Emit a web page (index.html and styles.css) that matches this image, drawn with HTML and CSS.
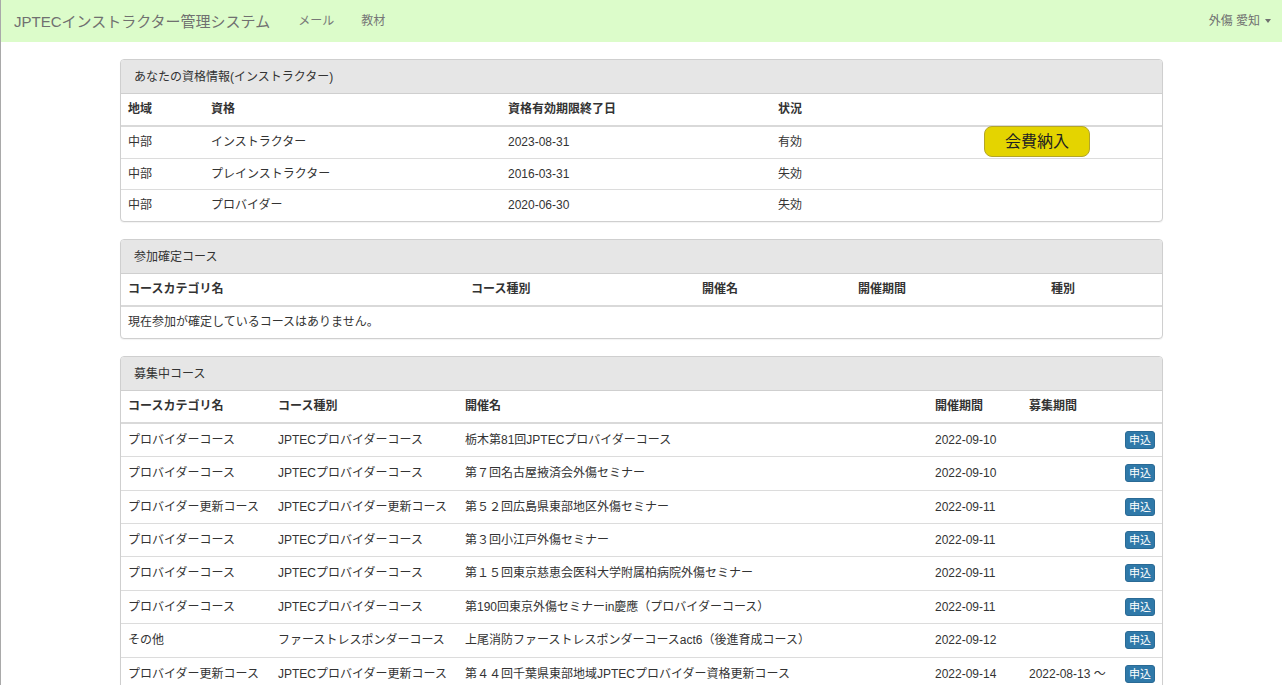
FILE: index.html
```html
<!DOCTYPE html>
<html lang="ja">
<head>
<meta charset="utf-8">
<title>JPTECインストラクター管理システム</title>
<link rel="stylesheet" href="styles.css">
</head>
<body>
<nav class="navbar">
  <div class="nav-left">
    <a class="brand">JPTECインストラクター管理システム</a>
    <a class="nav-link">メール</a>
    <a class="nav-link">教材</a>
  </div>
  <a class="nav-user">外傷 愛知 <span class="caret"></span></a>
</nav>
<main class="container">
  <section class="panel">
    <div class="panel-heading">あなたの資格情報(インストラクター)</div>
    <table class="table t1">
      <colgroup><col class="c1a"><col class="c1b"><col class="c1c"><col class="c1d"><col></colgroup>
      <thead><tr><th>地域</th><th>資格</th><th>資格有効期限終了日</th><th>状況</th><th></th></tr></thead>
      <tbody>
        <tr><td>中部</td><td>インストラクター</td><td>2023-08-31</td><td>有効</td><td class="btn-cell"><span class="btn-pay">会費納入</span></td></tr>
        <tr><td>中部</td><td>プレインストラクター</td><td>2016-03-31</td><td>失効</td><td></td></tr>
        <tr><td>中部</td><td>プロバイダー</td><td>2020-06-30</td><td>失効</td><td></td></tr>
      </tbody>
    </table>
  </section>

  <section class="panel">
    <div class="panel-heading">参加確定コース</div>
    <table class="table t2">
      <colgroup><col class="c2a"><col class="c2b"><col class="c2c"><col class="c2d"><col></colgroup>
      <thead><tr><th>コースカテゴリ名</th><th>コース種別</th><th>開催名</th><th>開催期間</th><th>種別</th></tr></thead>
      <tbody>
        <tr><td colspan="5">現在参加が確定しているコースはありません。</td></tr>
      </tbody>
    </table>
  </section>

  <section class="panel">
    <div class="panel-heading">募集中コース</div>
    <table class="table t3">
      <colgroup><col class="c3a"><col class="c3b"><col class="c3c"><col class="c3d"><col class="c3e"><col></colgroup>
      <thead><tr><th>コースカテゴリ名</th><th>コース種別</th><th>開催名</th><th>開催期間</th><th>募集期間</th><th></th></tr></thead>
      <tbody>
        <tr><td>プロバイダーコース</td><td>JPTECプロバイダーコース</td><td>栃木第81回JPTECプロバイダーコース</td><td>2022-09-10</td><td></td><td class="apply"><span class="btn-apply">申込</span></td></tr>
        <tr><td>プロバイダーコース</td><td>JPTECプロバイダーコース</td><td>第７回名古屋掖済会外傷セミナー</td><td>2022-09-10</td><td></td><td class="apply"><span class="btn-apply">申込</span></td></tr>
        <tr><td>プロバイダー更新コース</td><td>JPTECプロバイダー更新コース</td><td>第５２回広島県東部地区外傷セミナー</td><td>2022-09-11</td><td></td><td class="apply"><span class="btn-apply">申込</span></td></tr>
        <tr><td>プロバイダーコース</td><td>JPTECプロバイダーコース</td><td>第３回小江戸外傷セミナー</td><td>2022-09-11</td><td></td><td class="apply"><span class="btn-apply">申込</span></td></tr>
        <tr><td>プロバイダーコース</td><td>JPTECプロバイダーコース</td><td>第１５回東京慈恵会医科大学附属柏病院外傷セミナー</td><td>2022-09-11</td><td></td><td class="apply"><span class="btn-apply">申込</span></td></tr>
        <tr><td>プロバイダーコース</td><td>JPTECプロバイダーコース</td><td>第190回東京外傷セミナーin慶應（プロバイダーコース）</td><td>2022-09-11</td><td></td><td class="apply"><span class="btn-apply">申込</span></td></tr>
        <tr><td>その他</td><td>ファーストレスポンダーコース</td><td>上尾消防ファーストレスポンダーコースact6（後進育成コース）</td><td>2022-09-12</td><td></td><td class="apply"><span class="btn-apply">申込</span></td></tr>
        <tr><td>プロバイダー更新コース</td><td>JPTECプロバイダー更新コース</td><td>第４４回千葉県東部地域JPTECプロバイダー資格更新コース</td><td>2022-09-14</td><td>2022-08-13 〜</td><td class="apply"><span class="btn-apply">申込</span></td></tr>
        <tr><td>プロバイダーコース</td><td>JPTECプロバイダーコース</td><td>第２回外傷セミナー</td><td>2022-09-17</td><td></td><td class="apply"><span class="btn-apply">申込</span></td></tr>
      </tbody>
    </table>
  </section>
</main>
</body>
</html>
```

FILE: styles.css
```css
* { box-sizing: border-box; }
html, body { margin: 0; padding: 0; }
body {
  font-family: "Liberation Sans", "Noto Sans CJK JP", sans-serif;
  font-size: 12px;
  line-height: 17px;
  color: #333;
  background: #fff;
  border-left: 1px solid #a9a9a9;
  min-height: 685px;
}
.navbar {
  height: 42px;
  background: #dcfcca;
  display: flex;
  align-items: center;
  justify-content: space-between;
  padding: 0 11px 0 13px;
}
.nav-left { display: flex; align-items: center; }
.brand {
  font-size: 15px;
  color: #707070;
  margin-right: 28px;
}
.nav-link {
  font-size: 12px;
  color: #777;
  margin-right: 27px;
}
.nav-user {
  font-size: 12px;
  color: #707070;
  display: flex;
  align-items: center;
}
.caret {
  display: inline-block;
  width: 0; height: 0;
  margin-left: 5px;
  border-top: 4px solid #707070;
  border-left: 3.5px solid transparent;
  border-right: 3.5px solid transparent;
}
.container {
  width: 1043px;
  margin: 0 auto;
  padding-top: 17px;
  display: flex;
  flex-direction: column;
  gap: 17px;
}
.panel {
  border: 1px solid #cfcfcf;
  border-radius: 4px;
  background: #fff;
  box-shadow: 0 1px 1px rgba(0,0,0,0.05);
  overflow: hidden;
}
.panel-heading {
  background: #e6e6e6;
  border-bottom: 1px solid #cfcfcf;
  padding: 9px 13px 8px;
  line-height: 16px;
  color: #333;
}
.table {
  width: 100%;
  border-collapse: collapse;
  table-layout: fixed;
}
.table th, .table td {
  text-align: left;
  padding: 7px 7px;
  vertical-align: middle;
  white-space: nowrap;
}
.table td { line-height: 16.67px; }
.table th {
  font-weight: bold;
  line-height: 17px;
  border-bottom: 2px solid #d9d9d9;
}
.table tbody td { border-top: 1px solid #dcdcdc; }
.table tbody tr:first-child td { border-top: 0; }

.c1a { width: 83px; }
.c1b { width: 297px; }
.c1c { width: 270px; }
.c1d { width: 207px; }
.btn-cell { padding-top: 0 !important; padding-bottom: 0 !important; }
.btn-pay {
  display: inline-block;
  width: 106px;
  height: 31px;
  line-height: 29px;
  text-align: center;
  font-size: 16px;
  color: #222;
  background: #e4d400;
  border: 1px solid #b3a52a;
  border-radius: 8px;
  margin-top: -2px;
  margin-left: -1px;
  vertical-align: top;
}

.c2a { width: 343px; }
.c2b { width: 231px; }
.c2c { width: 156px; }
.c2d { width: 193px; }

.c3a { width: 150px; }
.c3b { width: 187px; }
.c3c { width: 470px; }
.c3d { width: 94px; }
.c3e { width: 96px; }
.t3 tbody td { line-height: 18.43px; }
.apply { text-align: right !important; padding-right: 8px !important; }
.btn-apply {
  display: inline-block;
  width: 30px;
  height: 18px;
  line-height: 16px;
  font-size: 11px;
  text-align: center;
  color: #fff;
  background: #2f79a9;
  border: 1px solid #2a6a95;
  border-radius: 3px;
  vertical-align: top;
}
```
